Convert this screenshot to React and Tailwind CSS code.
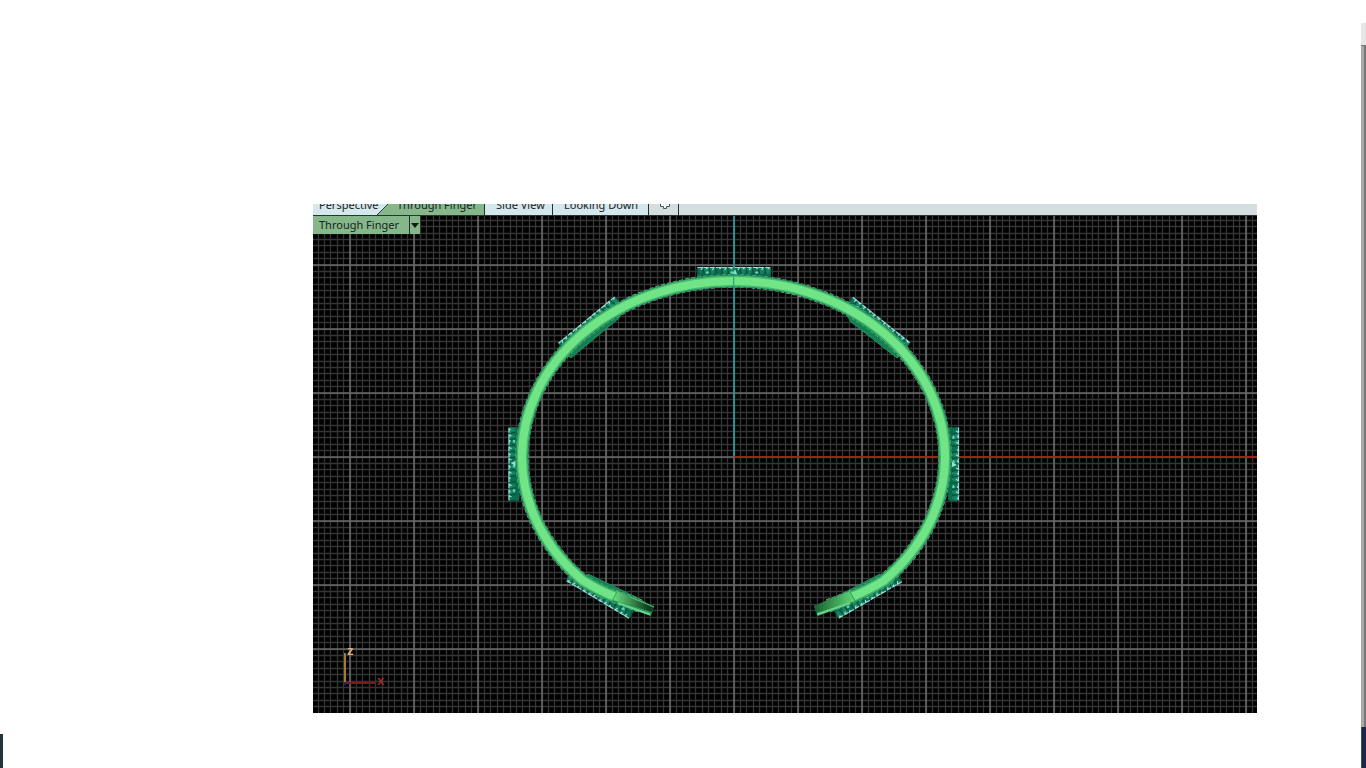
import React, { useState } from 'react';

const TABS = [
  { name: 'Perspective', className: 'w-16 pl-1.5 bg-[#d3e7ec]' },
  { name: 'Through Finger', className: 'w-24 pl-2 bg-[#85b78b] border-r border-[#20302c]' },
  { name: 'Side View', className: 'w-[68px] pl-[11px] bg-[#d3e7ec] border-r border-[#20302c]' },
  { name: 'Looking Down', className: 'w-24 pl-[11px] bg-[#d3e7ec] border-r border-[#20302c]' },
];

// World origin inside the viewport and the grid pitch
const ORIGIN = { x: 421, y: 241 };
const MAJOR = 64;
const MINOR = 6.4;

const steps = (origin, size, pitch) => {
  const list = [];
  const first = -Math.floor(origin / pitch);
  for (let i = first; origin + i * pitch < size; i++) {
    list.push(origin + i * pitch);
  }
  return list;
};

function Grid({ width, height }) {
  const lines = (pitch, place) =>
    steps(ORIGIN.x, width, pitch).map((x) => `M${place(x)} 0V${height}`).join('') +
    steps(ORIGIN.y, height, pitch).map((y) => `M0 ${place(y)}H${width}`).join('');

  return (
    <g fill="none">
      <path d={lines(MINOR, (v) => Math.floor(v) + 0.5)} stroke="#353535" strokeWidth="1.3" />
      <path d={lines(MAJOR, (v) => v)} stroke="#6a6a6a" strokeWidth="1.6" />
    </g>
  );
}

// Row of stones in its setting, drawn flat and centred, outer side up
function Stones({ x, y, angle, length = 74 }) {
  const half = length / 2;
  const count = 12;
  const pitch = length / count;
  return (
    <g transform={`translate(${x} ${y}) rotate(${angle})`}>
      <rect x={-half} y="-5" width={length} height="11" rx="2" fill="#0b6a4c" />
      {Array.from({ length: count }, (_, i) => {
        const left = -half + i * pitch;
        return (
          <g key={i}>
            <path d={`M${left + 0.5} -3l2 -2h2l1.5 2l-2 5h-2z`} fill={i % 3 ? '#128560' : '#0a7050'} />
            <path
              d={`M${left + 0.5} -4.500h${i % 3 ? 4 : 5}l-1.500 ${i % 2 ? 1.5 : 2.5}`}
              fill="none"
              stroke="#a3dbd8"
              strokeWidth="1.2"
            />
            <path d={`M${left} -3l1 5`} stroke="#064b38" />
            {i % 4 === 1 && <path d={`M${left + 2} 1l2 -2l2 1l-1 2z`} fill="#5fd2ae" />}
          </g>
        );
      })}
      <path d="M-2 2l3 -5l2 5z" fill="#8ce5cf" />
    </g>
  );
}

const BAND = 'M640 606L612 595.5C601 591 592 586 583 580.6A211.5 176 0 0 1 522 457A211.5 176 0 0 1 945 457A211.5 176 0 0 1 884 580.6C875 586 866 591 855 595.5L828 606';

function Bracelet() {
  return (
    <g transform="translate(-313 -216)">
      <Stones x={734} y={272} angle={0} />
      <Stones x={589.5} y={323.5} angle={-39.5} />
      <Stones x={878.5} y={323.5} angle={38.5} />
      <Stones x={513.5} y={464} angle={-90} />
      <Stones x={954} y={464} angle={90} />
      <Stones x={600} y={595.5} angle={-149} />
      <Stones x={868} y={596} angle={150} />

      {/* backs of the settings, inside the band */}
      <g fill="#148052" stroke="#1d915e">
        <path d="M700 283h68l-6 4h-56z" />
        <path d="M566 354l5 4l47 -39l7 -10l-9 0z" />
        <path d="M902 354l-5 4l-46 -36l-8 -13l9 0z" />
        <path d="M524 430l4 12v34l-3 20z" />
        <path d="M943 430l-4 12v34l3 20z" />
        <path d="M588 574l48 23l10 6l-6 4l-54 -27z" />
        <path d="M880 574l-50 26l-8 5l6 2l54 -25z" />
      </g>

      <path d={BAND} fill="none" stroke="#71a99a" strokeWidth="13.5" strokeDasharray="4 2" />
      <path d={BAND} fill="none" stroke="#188354" strokeWidth="12.5" />
      <path d={BAND} fill="none" stroke="#43b969" strokeWidth="11" />
      <path d={BAND} fill="none" stroke="#70e487" strokeWidth="8" />
      <path d="M733.5 276v11" stroke="#3da969" />

      {/* open ends */}
      <path d="M617 591l37 15l-3 10l-39 -14z" fill="#27935a" />
      <path d="M617 591l37 15l-2 6l-39 -12z" fill="url(#endLeft)" />
      <path d="M618 603l32 11.500" stroke="#67d583" strokeWidth="2" />
      <path d="M630 597l24 10" stroke="#5ac97a" />
      <path d="M850 591l-36 15l4 10l38 -14z" fill="#27935a" />
      <path d="M850 591l-36 15l2 7l39 -12z" fill="url(#endRight)" />
      <path d="M850 603l-33 11.500" stroke="#67d583" strokeWidth="2" />
      <path d="M850 592l5 9M617 592l-5 9" stroke="#35a95d" />
    </g>
  );
}

function Viewport() {
  const width = 944;
  const height = 497;
  return (
    <svg viewBox={`0 0 ${width} ${height}`} className="block w-full bg-black">
      <defs>
        <linearGradient id="endLeft">
          <stop offset="0" stopColor="#6be080" />
          <stop offset="0.85" stopColor="#103f20" />
        </linearGradient>
        <linearGradient id="endRight">
          <stop offset="0.05" stopColor="#1a6434" />
          <stop offset="1" stopColor="#62d978" />
        </linearGradient>
      </defs>
      <Grid width={width} height={height} />
      <path d="M421 0V241" stroke="#2b8f8f" strokeWidth="2" />
      <path d="M421 241H944" stroke="#9c2418" strokeWidth="2" />
      <Bracelet />
      <path d="M421 50V71" stroke="#28a487" opacity="0.55" />

      {/* axis marker */}
      <path d="M32 437V467" stroke="#a57c2c" strokeWidth="2" />
      <path d="M32 467H62" stroke="#7c1a17" strokeWidth="2" />
      <path d="M31 466h2v3h-2z" fill="#20206c" />
      <g className="font-['Liberation_Sans'] text-[13px] font-bold">
        <text x="34" y="439" fill="#e3ad80">z</text>
        <text x="64" y="469" fill="#9b2b20">x</text>
      </g>
    </svg>
  );
}

function App() {
  const [active, setActive] = useState('Through Finger');

  return (
    <div className="flex min-h-screen bg-white font-['Noto_Sans',sans-serif] text-[11px] leading-4 text-[#182321]">
      <div className="flex w-[3px] shrink-0 flex-col justify-end">
        <div className="h-[34px] bg-[#20343b]" />
      </div>

      <main className="min-w-0 flex-1 pt-[204px] pr-[104px] pl-[310px]">
        <div className="flex h-3 items-stretch overflow-hidden border-b border-[#26362f] bg-[#d4dedf]">
          {TABS.map((tab, i) => (
            <React.Fragment key={tab.name}>
              {i === 1 && (
                <svg viewBox="0 0 12 11" className="h-[11px] w-3 shrink-0 bg-[#d3e7ec]">
                  <path d="M0 11L11 0h1v11z" fill="#85b78b" />
                  <path d="M0 11L11 0" stroke="#2c4038" />
                </svg>
              )}
              <button
                type="button"
                onClick={() => setActive(tab.name)}
                className={`flex shrink-0 items-end pb-0.5 text-left whitespace-nowrap ${tab.className}`}
              >
                <span className="relative">{tab.name}</span>
              </button>
            </React.Fragment>
          ))}
          <button type="button" aria-label="New viewport" className="flex w-[30px] shrink-0 justify-center border-r border-[#20302c]">
            <svg viewBox="0 0 12 11" className="h-[11px] w-3" fill="#f2f5f5" stroke="#4a5553">
              <path d="M5.500 -5v4.500h-3v3h3v2h3v-2h3v-3h-3v-5" />
            </svg>
          </button>
        </div>

        <section className="relative" aria-label={active}>
          <Viewport />
          <button type="button" className="absolute top-0 left-0 flex h-[18px] w-[107px] items-center bg-[#85b78b] text-left">
            <span className="w-24 pl-1.5 whitespace-nowrap">{active}</span>
            <span className="flex h-full flex-1 items-center justify-center border-l border-[#20302c]">
              <svg viewBox="0 0 8 5" className="h-[5px] w-2">
                <path d="M0 0h8L4 5z" fill="#101a14" />
              </svg>
            </span>
          </button>
        </section>
      </main>

      <div className="flex w-[5px] shrink-0 flex-col pt-[23px]">
        <div className="h-[22px] bg-[#e6e6e6]" />
        <div className="flex-1 border-t border-r-2 border-[#777777] bg-[#a9a9a9]" />
        <div className="h-[41px] border-l border-[#3c5055] bg-[#1e2549]" />
      </div>
    </div>
  );
}

export default App;
